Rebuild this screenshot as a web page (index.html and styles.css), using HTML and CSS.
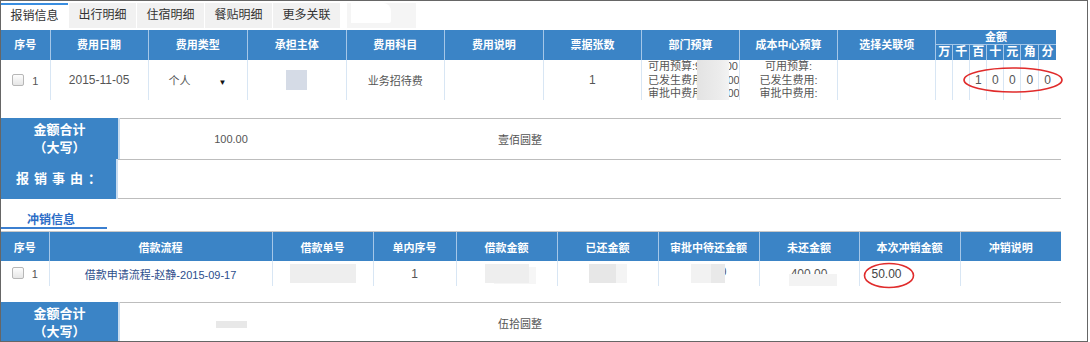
FILE: index.html
```html
<!DOCTYPE html>
<html>
<head>
  <meta charset="utf-8">
  <title>报销信息</title>
  <link rel="stylesheet" href="styles.css">
</head>
<body>
  <div class="frame">
    <div class="tabs">
      <div class="tab active">报销信息</div>
      <div class="tab">出行明细</div>
      <div class="tab">住宿明细</div>
      <div class="tab">餐贴明细</div>
      <div class="tab">更多关联</div>
      <div class="tab blur"><span class="blob"></span></div>
    </div>

    <table class="grid expense">
      <colgroup>
        <col class="w49"><col class="w98"><col class="w99"><col class="w99"><col class="w98">
        <col class="w99"><col class="w98"><col class="w98"><col class="w98"><col class="w98">
        <col class="w17"><col class="w17"><col class="w17"><col class="w17"><col class="w17"><col class="w18"><col class="w17">
      </colgroup>
      <thead>
        <tr class="head-top">
          <th rowspan="2" class="first">序号</th>
          <th rowspan="2">费用日期</th>
          <th rowspan="2">费用类型</th>
          <th rowspan="2">承担主体</th>
          <th rowspan="2">费用科目</th>
          <th rowspan="2">费用说明</th>
          <th rowspan="2">票据张数</th>
          <th rowspan="2">部门预算</th>
          <th rowspan="2">成本中心预算</th>
          <th rowspan="2">选择关联项</th>
          <th colspan="7">金额</th>
        </tr>
        <tr class="head-sub">
          <th>万</th><th>千</th><th>百</th><th>十</th><th>元</th><th>角</th><th>分</th>
        </tr>
      </thead>
      <tbody>
        <tr class="row-tall">
          <td class="first"><span class="check"></span>1</td>
          <td class="num">2015-11-05</td>
          <td class="type">个人<span class="arrow">▼</span></td>
          <td><span class="subject"></span></td>
          <td>业务招待费</td>
          <td></td>
          <td class="num">1</td>
          <td class="budget">
            <div class="lines">可用预算:9,600.00<br>已发生费用:240.00<br>审批中费用:160.00</div>
            <span class="mask"></span>
          </td>
          <td class="budget center">
            <div class="lines">可用预算:<br>已发生费用:<br>审批中费用:</div>
          </td>
          <td></td>
          <td></td><td></td>
          <td class="num">1</td><td class="num">0</td><td class="num">0</td><td class="num">0</td><td class="num">0</td>
        </tr>
      </tbody>
    </table>

    <div class="total first-total">
      <div class="total-row">
        <div class="label">金额合计<br>（大写）</div>
        <div class="body">
          <div class="cell amount">100.00</div>
          <div class="cell words">壹佰圆整</div>
        </div>
      </div>
      <div class="total-row short last">
        <div class="label spaced">报销事由：</div>
        <div class="body"></div>
      </div>
    </div>

    <div class="section-head">
      <div class="section-tab">冲销信息</div>
    </div>

    <table class="grid offset">
      <colgroup>
        <col class="w48"><col class="w223"><col class="w101"><col class="w83"><col class="w101">
        <col class="w101"><col class="w101"><col class="w100"><col class="w101"><col class="w101">
      </colgroup>
      <thead>
        <tr class="head-one">
          <th class="first">序号</th>
          <th>借款流程</th>
          <th>借款单号</th>
          <th>单内序号</th>
          <th>借款金额</th>
          <th>已还金额</th>
          <th>审批中待还金额</th>
          <th>未还金额</th>
          <th>本次冲销金额</th>
          <th>冲销说明</th>
        </tr>
      </thead>
      <tbody>
        <tr class="row-short">
          <td class="first"><span class="check"></span>1</td>
          <td class="link">借款申请流程-赵静-2015-09-17</td>
          <td><span class="redact r66"></span></td>
          <td class="num">1</td>
          <td><span class="redact r44 tail"></span></td>
          <td><span class="redact r38 split"></span></td>
          <td><span class="redact r34 over"></span><span class="num">0</span></td>
          <td><span class="num partial">400.00</span></td>
          <td class="num left">50.00</td>
          <td></td>
        </tr>
      </tbody>
    </table>

    <div class="total second-total">
      <div class="total-row">
        <div class="label">金额合计<br>（大写）</div>
        <div class="body">
          <div class="cell amount"><span class="redact r31 thin"></span></div>
          <div class="cell words">伍拾圆整</div>
        </div>
      </div>
    </div>

    <svg class="ring ring-amount" width="102" height="28" viewBox="0 0 102 28">
      <ellipse cx="51" cy="14" rx="49" ry="12" fill="none" stroke="#e02b2b" stroke-width="1.6"/>
    </svg>
    <svg class="ring ring-offset" width="52" height="27" viewBox="0 0 52 27">
      <ellipse cx="26" cy="13.5" rx="24.5" ry="12" fill="none" stroke="#e02b2b" stroke-width="1.6"/>
    </svg>
  </div>
</body>
</html>
```

FILE: styles.css
```css
body {
  margin: 0;
  font-family: "Liberation Sans", "Noto Sans CJK SC", sans-serif;
  font-size: 11px;
  color: #555;
  background: #fff;
}

.frame {
  position: relative;
  width: 1086px;
  height: 340px;
  border: 1px solid #666;
  overflow: hidden;
}

/* tabs */
.tabs {
  display: flex;
  gap: 1px;
  height: 29px;
  padding-top: 2px;
  box-sizing: border-box;
}

.tab {
  width: 67px;
  height: 25px;
  line-height: 25px;
  text-align: center;
  background: #f1f1f1;
  color: #333;
  font-size: 12px;
  box-sizing: border-box;
}

.tab.active {
  background: #fff;
  border-top: 2px solid #3a8ee0;
  line-height: 22px;
}

.tab.blur {
  width: 69px;
  margin-left: 6px;
  background: #f5f5f5;
}

.tab.blur .blob {
  display: block;
  width: 40px;
  height: 20px;
  margin-left: 4px;
  background: #fff;
  border-radius: 0 8px 2px 0;
}

/* tables */
.grid {
  border-collapse: collapse;
  table-layout: fixed;
}

.expense { width: 1055px; }
.offset { width: 1060px; }

.w17 { width: 17px; }
.w18 { width: 18px; }
.w48 { width: 48px; }
.w49 { width: 49px; }
.w83 { width: 83px; }
.w98 { width: 98px; }
.w99 { width: 99px; }
.w100 { width: 100px; }
.w101 { width: 101px; }
.w223 { width: 223px; }

.grid th {
  background: #3b84c6;
  color: #fff;
  font-size: 11px;
  font-weight: bold;
  padding: 0;
  border-left: 1px solid #a5c7e8;
  white-space: nowrap;
}

.grid td {
  padding: 0;
  text-align: center;
  border-left: 1px solid #d8e6f4;
  white-space: nowrap;
  vertical-align: middle;
}

.grid .first {
  border-left: 0;
}

.head-top { height: 14px; }
.head-top th { line-height: 14px; }

.head-sub { height: 15px; }
.head-sub th {
  line-height: 15px;
  font-size: 12px;
  border-top: 1px solid #a5c7e8;
}

.head-one { height: 29px; }
.row-tall { height: 40px; }
.row-short { height: 25px; }

.num { font-size: 12px; }

.check {
  display: inline-block;
  width: 10px;
  height: 10px;
  margin-right: 8px;
  border: 1px solid #b7b7b7;
  border-radius: 2px;
  background: linear-gradient(#fdfdfd, #e6e6e6);
  vertical-align: -1px;
}

.grid td.type {
  text-align: left;
  padding-left: 20px;
}

.type .arrow {
  margin-left: 28px;
  font-size: 8px;
  color: #111;
}

.subject {
  display: inline-block;
  width: 21px;
  height: 20px;
  background: #d5dbe6;
  vertical-align: middle;
}

.grid td.budget {
  position: relative;
  vertical-align: top;
  text-align: left;
}

.budget .lines {
  height: 40px;
  overflow: hidden;
  padding-left: 6px;
  line-height: 13.5px;
}

.budget.center .lines {
  padding-left: 0;
  text-align: center;
}

.budget .mask {
  position: absolute;
  left: 55px;
  top: 0;
  width: 32px;
  height: 40px;
  background: linear-gradient(to right, #e3e3e3, #ececec 70%, #f3f3f3);
}

.link { color: #2d4e8c; }

.grid td.left {
  text-align: left;
  padding-left: 12px;
  color: #444;
}

.redact {
  display: inline-block;
  height: 19px;
  background: #eeeeee;
  vertical-align: middle;
}

.r31 { width: 31px; }
.r34 { width: 34px; }
.r38 { width: 38px; }
.r44 { width: 44px; }
.r66 { width: 66px; }

.redact.tail { box-shadow: 8px 2px 0 -1px #f6f6f6; }
.redact.split { background: linear-gradient(to right, #e7e7e7 70%, #f4f4f4 70%); }
.redact.thin { height: 7px; background: #e8e8e8; }

.redact.over {
  position: relative;
  margin-right: -5px;
  background: linear-gradient(to right, #f2f2f2 60%, #e9e9e9 60%);
}

.partial {
  position: relative;
}

.partial::after {
  content: "";
  position: absolute;
  left: -2px;
  right: -10px;
  top: 7px;
  height: 12px;
  background: #f3f3f3;
}

/* totals */
.total {
  width: 1060px;
}

.first-total { margin-top: 18px; }
.second-total { margin-top: 16px; }

.total-row {
  display: flex;
  height: 41px;
}

.total-row.short { height: 40px; }

.total .label {
  width: 117px;
  flex: none;
  display: flex;
  align-items: center;
  justify-content: center;
  text-align: center;
  background: #3b84c6;
  border-right: 2px solid #c9dcef;
  color: #fff;
  font-size: 13px;
  font-weight: bold;
  line-height: 18px;
}

.total .label.spaced {
  letter-spacing: 5px;
  padding-left: 5px;
  box-sizing: border-box;
}

.total .body {
  flex: 1;
  display: flex;
  align-items: center;
  border-top: 1px solid #bdbdbd;
}

.total-row.last .body {
  border-bottom: 1px solid #bdbdbd;
}

.total .cell {
  text-align: center;
}

.total .amount { width: 222px; }
.total .words { width: 356px; }

/* section title */
.section-head {
  display: flex;
  align-items: flex-end;
  width: 1060px;
  height: 32px;
  border-bottom: 1px solid #c8c8c8;
}

.section-tab {
  width: 106px;
  margin-bottom: 2px;
  padding-left: 26px;
  box-sizing: border-box;
  border-bottom: 2px solid #3b7fd0;
  color: #2c6cc6;
  font-size: 12px;
  font-weight: bold;
  line-height: 14px;
}

/* red marks */
.ring {
  position: absolute;
}

.ring-amount {
  left: 961px;
  top: 65px;
}

.ring-offset {
  left: 862px;
  top: 261px;
}
```
